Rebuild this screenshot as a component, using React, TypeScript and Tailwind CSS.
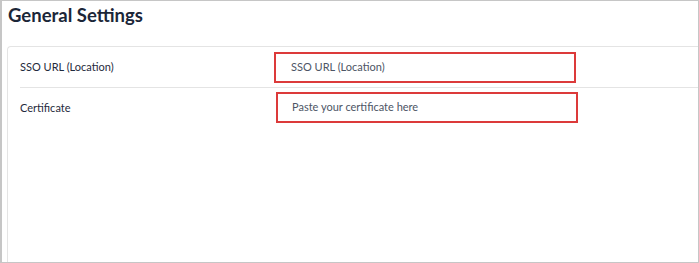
export default function App() {
  return (
    <div className="w-[699px] h-[263px] overflow-hidden bg-white border border-l-2 border-[#c6c6c6] font-['Lato','Noto_Sans',sans-serif]">
      <h1 className="pl-[6px] pt-[3px] text-[18.5px] leading-[22px] font-bold text-[#1b2638]">
        General Settings
      </h1>

      <div className="ml-[5px] mt-[20px] h-[300px] border-l border-t border-[#e4e4e4] rounded-tl-[4px] pl-[12px]">
        {/* SSO URL row */}
        <div className="flex items-center h-[41px] border-b border-[#e4e4e4]">
          <div className="w-[254px] text-[11px] text-[#1f2a3c]">SSO URL (Location)</div>
          <div className="flex items-center w-[302px] h-[31px] border-2 border-[#dc3a3a] pl-[15px] text-[11px] text-[#4d5565]">
            SSO URL (Location)
          </div>
        </div>

        {/* Certificate row */}
        <div className="flex items-start h-[40px] pt-[4px]">
          <div className="w-[256px] pt-[8px] text-[11px] text-[#1f2a3c]">Certificate</div>
          <div className="flex items-center w-[302px] h-[31px] border-2 border-[#dc3a3a] pl-[14px] text-[11px] text-[#4d5565]">
            Paste your certificate here
          </div>
        </div>
      </div>
    </div>
  );
}
